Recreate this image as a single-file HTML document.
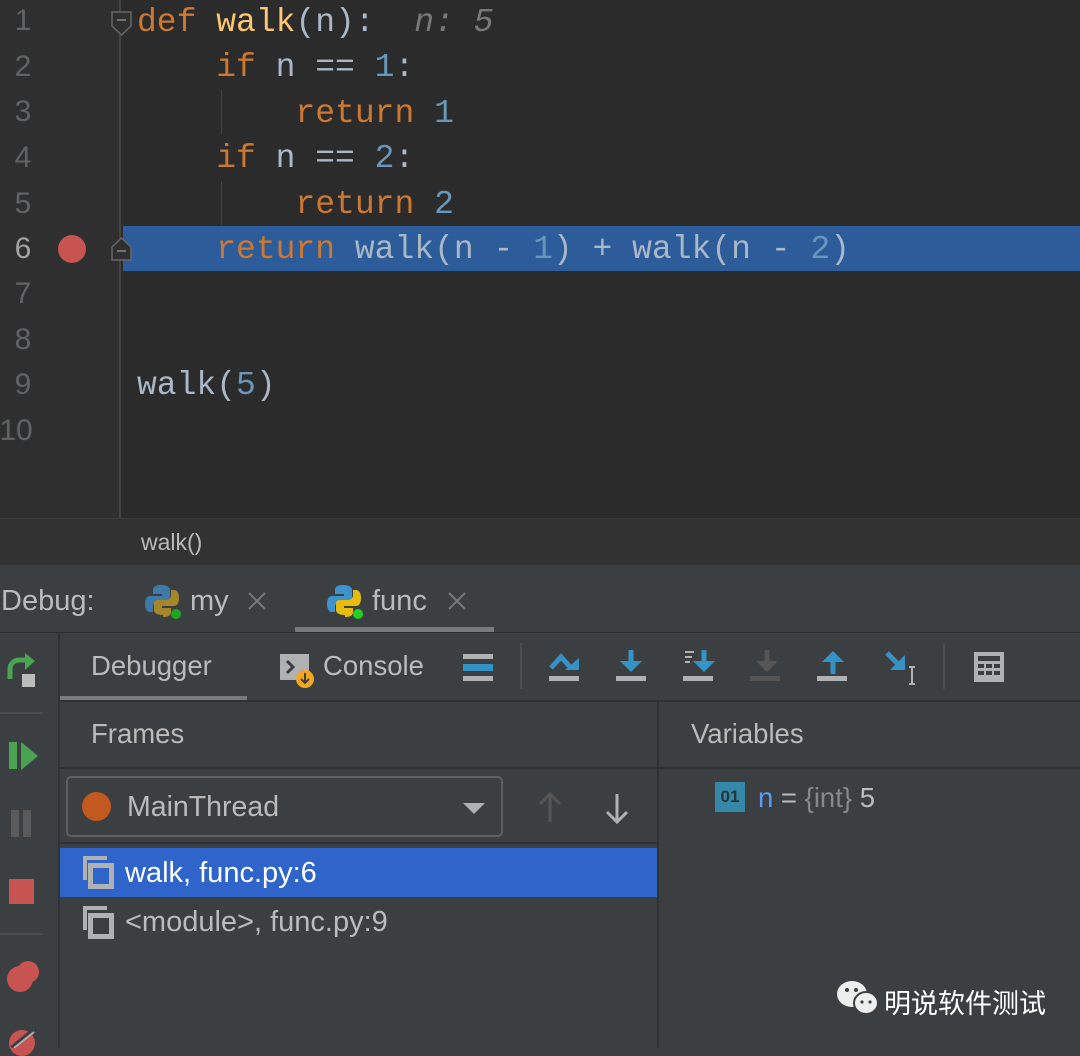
<!DOCTYPE html>
<html><head><meta charset="utf-8"><style>
*{margin:0;padding:0;box-sizing:border-box}
body{width:1080px;height:1048px;overflow:hidden;background:#3c3f41;position:relative;font-family:"Liberation Sans","Noto Sans CJK SC",sans-serif}
.a{position:absolute}
#ed{left:0;top:0;width:1080px;height:518px;background:#2b2b2b}
#gut{left:0;top:0;width:121px;height:518px;background:#2f2f2f;border-right:2px solid #424242}
.ln{position:absolute;left:0;width:46px;text-align:center;font:30px "Liberation Sans",sans-serif;color:#606366}
.cl{position:absolute;left:137px;font:33px/45px "Liberation Mono",monospace;color:#a9b7c6;white-space:pre}
.k{color:#cc7832}.f{color:#ffc66d}.n{color:#6897bb}.h{color:#787878;font-style:italic}
#hl{left:123px;top:226px;width:957px;height:45px;background:#2d5c9a}
.t{color:#bbbbbb;font-size:27.5px}
.x{position:absolute}
</style></head><body>
<div class="a" id="ed"></div>
<div class="a" id="gut"></div>
<div class="a" id="hl"></div>
<div class="a" style="left:221px;top:90px;width:1px;height:44px;background:#444"></div>
<div class="a" style="left:221px;top:181px;width:1px;height:44px;background:#444"></div>
<div class="ln" style="top:4px">1</div><div class="ln" style="top:50px">2</div><div class="ln" style="top:95px">3</div><div class="ln" style="top:141px">4</div><div class="ln" style="top:187px">5</div><div class="ln" style="top:232px;color:#a4a3a3">6</div><div class="ln" style="top:277px">7</div><div class="ln" style="top:323px">8</div><div class="ln" style="top:368px">9</div><div class="ln" style="top:414px;left:-7px">10</div>
<div class="a" style="left:58px;top:235px;width:28px;height:28px;border-radius:50%;background:#c75450"></div>
<svg class="a" style="left:110px;top:10px" width="24" height="28"><path d="M2 2h19v14l-9.5 9l-9.5-9z" fill="#2f2f2f" stroke="#666" stroke-width="1.5"/><path d="M7 10h9" stroke="#888" stroke-width="1.5"/></svg>
<svg class="a" style="left:110px;top:236px" width="24" height="26"><path d="M2 24h19v-13l-9.5-9l-9.5 9z" fill="#2f2f2f" stroke="#666" stroke-width="1.5"/><path d="M7 15h9" stroke="#888" stroke-width="1.5"/></svg>
<div class="cl" style="top:0px"><span class="k">def </span><span class="f">walk</span>(n):  <span class="h">n: 5</span></div>
<div class="cl" style="top:45px">    <span class="k">if</span> n == <span class="n">1</span>:</div>
<div class="cl" style="top:91px">        <span class="k">return</span> <span class="n">1</span></div>
<div class="cl" style="top:136px">    <span class="k">if</span> n == <span class="n">2</span>:</div>
<div class="cl" style="top:182px">        <span class="k">return</span> <span class="n">2</span></div>
<div class="cl" style="top:227px">    <span class="k">return</span> walk(n - <span class="n">1</span>) + walk(n - <span class="n">2</span>)</div>
<div class="cl" style="top:363px">walk(<span class="n">5</span>)</div>
<div class="a" style="left:0;top:518px;width:1080px;height:47px;background:#323232;border-top:1px solid #3a3a3a"></div>
<div class="a" style="left:141px;top:529px;font-size:23px;color:#bbb">walk()</div>
<!-- debug header -->
<div class="a t" style="left:1px;top:585px;font-size:29px">Debug:</div>
<svg class="a" style="left:145px;top:583px" width="38" height="38"><path d="M16 2c-7 0-8 3-8 5v4h9v2H5c-3 0-5 3-5 8s2 8 5 8h3v-5c0-3 2-5 5-5h8c3 0 4-2 4-4V7c0-3-3-5-9-5z" fill="#3e7aa5"/><path d="M18 34c7 0 8-3 8-5v-4h-9v-2h12c3 0 5-3 5-8s-2-8-5-8h-3v5c0 3-2 5-5 5h-8c-3 0-4 2-4 4v6c0 3 3 5 9 5z" fill="#a6862a"/><circle cx="31" cy="31" r="5" fill="#1ea61e"/></svg>
<div class="a t" style="left:190px;top:585px;font-size:29px">my</div>
<svg class="x" style="left:247px;top:591px" width="20" height="20"><path d="M2 2l16 16M18 2L2 18" stroke="#777" stroke-width="2"/></svg>
<svg class="a" style="left:327px;top:583px" width="38" height="38"><path d="M16 2c-7 0-8 3-8 5v4h9v2H5c-3 0-5 3-5 8s2 8 5 8h3v-5c0-3 2-5 5-5h8c3 0 4-2 4-4V7c0-3-3-5-9-5z" fill="#3d94cc"/><path d="M18 34c7 0 8-3 8-5v-4h-9v-2h12c3 0 5-3 5-8s-2-8-5-8h-3v5c0 3-2 5-5 5h-8c-3 0-4 2-4 4v6c0 3 3 5 9 5z" fill="#e8bb10"/><circle cx="31" cy="31" r="5" fill="#23d123"/></svg>
<div class="a t" style="left:372px;top:585px;font-size:29px">func</div>
<svg class="x" style="left:447px;top:591px" width="20" height="20"><path d="M2 2l16 16M18 2L2 18" stroke="#777" stroke-width="2"/></svg>
<div class="a" style="left:295px;top:627px;width:199px;height:5px;background:#747a80"></div>
<div class="a" style="left:0;top:632px;width:1080px;height:1px;background:#2b2b2b"></div>
<!-- left toolbar -->
<div class="a" style="left:58px;top:633px;width:2px;height:415px;background:#2f3133"></div>
<svg class="a" style="left:5px;top:652px" width="36" height="36"><path d="M22 8H14a9 9 0 0 0-9 9v10" fill="none" stroke="#4aa351" stroke-width="5"/><path d="M20 1l10 8-10 9z" fill="#4aa351"/><rect x="17" y="22" width="13" height="13" fill="#bbb"/></svg>
<div class="a" style="left:0;top:712px;width:43px;height:2px;background:#4a4c4e"></div>
<div class="a" style="left:9px;top:742px;width:8px;height:27px;background:#4aa351"></div>
<div class="a" style="left:21px;top:742px;width:0;height:0;border-left:17px solid #4aa351;border-top:14px solid transparent;border-bottom:14px solid transparent"></div>
<div class="a" style="left:11px;top:810px;width:8px;height:27px;background:#5a5a5a"></div><div class="a" style="left:23px;top:810px;width:8px;height:27px;background:#5a5a5a"></div>
<div class="a" style="left:9px;top:879px;width:25px;height:25px;background:#c75450"></div>
<div class="a" style="left:0;top:933px;width:43px;height:2px;background:#4a4c4e"></div>
<div class="a" style="left:7px;top:966px;width:26px;height:26px;border-radius:50%;background:#c75450"></div>
<div class="a" style="left:17px;top:961px;width:22px;height:22px;border-radius:50%;background:#c75450;border:0"></div>
<div class="a" style="left:9px;top:1030px;width:26px;height:26px;border-radius:50%;background:#c75450"></div>
<svg class="a" style="left:8px;top:1028px" width="30" height="20"><path d="M4 20L26 2" stroke="#3c3f41" stroke-width="5"/><path d="M6 20L26 4" stroke="#afb1b3" stroke-width="2"/></svg>
<!-- tabs -->
<div class="a t" style="left:91px;top:650px">Debugger</div>
<div class="a" style="left:60px;top:696px;width:187px;height:5px;background:#747a80"></div>
<div class="a" style="left:60px;top:700px;width:1020px;height:2px;background:#2f3133"></div>
<svg class="a" style="left:278px;top:653px" width="40" height="36"><rect x="2" y="1" width="29" height="26" fill="#afb1b3"/><path d="M9 8l6 6-6 6" stroke="#3c3f41" stroke-width="3" fill="none"/><circle cx="27" cy="26" r="9" fill="#f4a623"/><path d="M27 20v10M23 26l4 4 4-4" stroke="#3c3f41" stroke-width="2" fill="none"/></svg>
<div class="a t" style="left:323px;top:650px">Console</div>
<div class="a" style="left:463px;top:654px;width:30px;height:5px;background:#afb1b3"></div>
<div class="a" style="left:463px;top:664px;width:30px;height:7px;background:#3592c4"></div>
<div class="a" style="left:463px;top:676px;width:30px;height:5px;background:#afb1b3"></div>
<div class="a" style="left:520px;top:643px;width:2px;height:46px;background:#4a4c4e"></div>
<div class="a" style="left:943px;top:643px;width:2px;height:46px;background:#4a4c4e"></div>
<svg class="a" style="left:545px;top:648px" width="400" height="40">
<g fill="#afb1b3"><rect x="4" y="28" width="30" height="5"/><rect x="71" y="28" width="30" height="5"/><rect x="138" y="28" width="30" height="5"/><rect x="205" y="28" width="30" height="5" fill="#555"/><rect x="272" y="28" width="30" height="5"/></g>
<path d="M6 20l10-11 10 11" stroke="#3592c4" stroke-width="5" fill="none"/><path d="M20 22h14v-12z" fill="#3592c4"/>
<path d="M86 2v12" stroke="#3592c4" stroke-width="5"/><path d="M75 13h22l-11 11z" fill="#3592c4"/>
<g fill="#afb1b3"><rect x="140" y="3" width="9" height="2"/><rect x="140" y="8" width="7" height="2"/><rect x="140" y="13" width="5" height="2"/></g>
<path d="M159 2v12" stroke="#3592c4" stroke-width="5"/><path d="M148 13h22l-11 11z" fill="#3592c4"/>
<path d="M222 2v12" stroke="#555" stroke-width="5"/><path d="M211 13h22l-11 11z" fill="#555"/>
<path d="M288 26v-14" stroke="#3592c4" stroke-width="5"/><path d="M277 14h22l-11-11z" fill="#3592c4"/>
<path d="M342 5l12 12" stroke="#3592c4" stroke-width="5"/><path d="M345 22h15v-15z" fill="#3592c4"/>
<path d="M364 19h6M364 36h6M367 19v17" stroke="#afb1b3" stroke-width="2"/>
</svg>
<svg class="a" style="left:973px;top:651px" width="32" height="32"><rect x="1" y="1" width="30" height="30" fill="#afb1b3"/><rect x="5" y="5" width="22" height="5" fill="#3c3f41"/><g fill="#3c3f41"><rect x="5" y="13" width="6" height="4"/><rect x="13" y="13" width="6" height="4"/><rect x="21" y="13" width="6" height="4"/><rect x="5" y="20" width="6" height="4"/><rect x="13" y="20" width="6" height="4"/><rect x="21" y="20" width="6" height="4"/></g></svg>
<!-- frames -->
<div class="a t" style="left:91px;top:718px">Frames</div>
<div class="a t" style="left:691px;top:718px">Variables</div>
<div class="a" style="left:657px;top:702px;width:2px;height:346px;background:#2f3133"></div>
<div class="a" style="left:60px;top:767px;width:1020px;height:2px;background:#2f3133"></div>
<div class="a" style="left:66px;top:776px;width:437px;height:61px;border:2px solid #5e6060;border-radius:5px;background:#3c3f41"></div>
<div class="a" style="left:82px;top:792px;width:29px;height:29px;border-radius:50%;background:#c3591f"></div>
<div class="a t" style="left:127px;top:791px;font-size:28.5px">MainThread</div>
<div class="a" style="left:463px;top:803px;border-top:11px solid #afb1b3;border-left:11px solid transparent;border-right:11px solid transparent"></div>
<svg class="a" style="left:535px;top:790px" width="100" height="36"><path d="M15 4v28M5 14l10-10 10 10" stroke="#555" stroke-width="3" fill="none"/><path d="M82 4v28M72 22l10 10 10-10" stroke="#afb1b3" stroke-width="3" fill="none"/></svg>
<div class="a" style="left:60px;top:842px;width:597px;height:2px;background:#2f3133"></div>
<div class="a" style="left:60px;top:848px;width:597px;height:49px;background:#2f65ca"></div>
<svg class="a" style="left:81px;top:856px" width="34" height="34"><path d="M2 0h24v4H6v20H2z" fill="#afb1b3"/><rect x="9.5" y="9.5" width="21" height="21" fill="none" stroke="#afb1b3" stroke-width="5"/></svg>
<div class="a" style="left:125px;top:857px;font-size:29px;color:#fff">walk, func.py:6</div>
<svg class="a" style="left:81px;top:906px" width="34" height="34"><path d="M2 0h24v4H6v20H2z" fill="#afb1b3"/><rect x="9.5" y="9.5" width="21" height="21" fill="none" stroke="#afb1b3" stroke-width="5"/></svg>
<div class="a t" style="left:125px;top:906px;font-size:29px">&lt;module&gt;, func.py:9</div>
<!-- variables -->
<div class="a" style="left:715px;top:782px;width:30px;height:30px;background:#3588a7;font:bold 17px/30px 'Liberation Sans';color:#27343a;text-align:center">01</div>
<div class="a" style="left:758px;top:782px;font-size:27.5px;color:#bbb"><span style="color:#589df6">n</span> = <span style="color:#888">{int}</span> 5</div>
<svg class="a" style="left:836px;top:980px" width="44" height="36"><ellipse cx="16" cy="14" rx="15" ry="13" fill="#eee"/><ellipse cx="30" cy="23" rx="12" ry="11" fill="#eee" stroke="#3c3f41" stroke-width="2"/><circle cx="11" cy="10" r="2" fill="#3c3f41"/><circle cx="20" cy="10" r="2" fill="#3c3f41"/><circle cx="26" cy="22" r="1.6" fill="#3c3f41"/><circle cx="34" cy="22" r="1.6" fill="#3c3f41"/></svg>
<div class="a" style="left:884px;top:982px;font-size:27px;color:#fff;font-family:'Noto Sans CJK SC',sans-serif">明说软件测试</div>
</body></html>
